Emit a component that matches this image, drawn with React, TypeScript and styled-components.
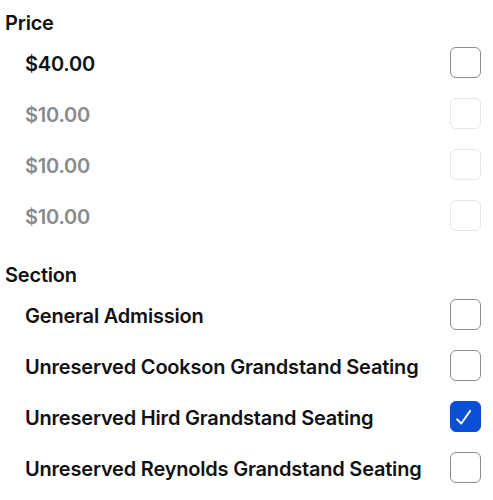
import React from "react";
import styled, { createGlobalStyle } from "styled-components";

const Global = createGlobalStyle`
  html, body { margin: 0; padding: 0; background: #fff; }
  body { font-family: Inter, "Noto Sans", sans-serif; color: #111; }
`;

const Page = styled.div`
  padding: 9px 12px 0 5px;
  display: flex;
  flex-direction: column;
`;

const Group = styled.section`
  display: flex;
  flex-direction: column;
  & + & { margin-top: 20px; }
`;

const Heading = styled.h3`
  margin: 0;
  font-size: 20px;
  line-height: 28px;
  font-weight: 600;
  letter-spacing: -0.2px;
  color: #111;
`;

const Row = styled.label`
  display: flex;
  align-items: center;
  justify-content: space-between;
  height: 51px;
  padding-left: 20px;
`;

const Label = styled.span<{ $disabled?: boolean }>`
  font-size: 20px;
  font-weight: 600;
  letter-spacing: -0.2px;
  padding-top: 2px;
  color: ${(p) => (p.$disabled ? "#8a8a8a" : "#111")};
`;

const Box = styled.span<{ $checked?: boolean; $disabled?: boolean }>`
  width: 31px;
  height: 31px;
  box-sizing: border-box;
  border-radius: 6px;
  border: 1px solid
    ${(p) => (p.$checked ? "#0a4fd6" : p.$disabled ? "#e6e6e6" : "#8c8c8c")};
  background: ${(p) => (p.$checked ? "#0a4fd6" : "#fff")};
  display: flex;
  align-items: center;
  justify-content: center;
  flex-shrink: 0;
`;

type Item = { label: string; checked?: boolean; disabled?: boolean };

const groups: { title: string; items: Item[] }[] = [
  {
    title: "Price",
    items: [
      { label: "$40.00" },
      { label: "$10.00", disabled: true },
      { label: "$10.00", disabled: true },
      { label: "$10.00", disabled: true },
    ],
  },
  {
    title: "Section",
    items: [
      { label: "General Admission" },
      { label: "Unreserved Cookson Grandstand Seating" },
      { label: "Unreserved Hird Grandstand Seating", checked: true },
      { label: "Unreserved Reynolds Grandstand Seating" },
    ],
  },
];

export default function App() {
  return (
    <>
      <Global />
      <Page>
        {groups.map((g) => (
          <Group key={g.title}>
            <Heading>{g.title}</Heading>
            {g.items.map((it, i) => (
              <Row key={i}>
                <Label $disabled={it.disabled}>{it.label}</Label>
                <Box $checked={it.checked} $disabled={it.disabled}>
                  {it.checked && (
                    <svg width="31" height="31" viewBox="0 0 31 31">
                      <path
                        d="M6.5 18.5 L11 23 L20.5 9.5"
                        fill="none"
                        stroke="#fff"
                        strokeWidth="2"
                        strokeLinecap="round"
                        strokeLinejoin="round"
                      />
                    </svg>
                  )}
                </Box>
              </Row>
            ))}
          </Group>
        ))}
      </Page>
    </>
  );
}
